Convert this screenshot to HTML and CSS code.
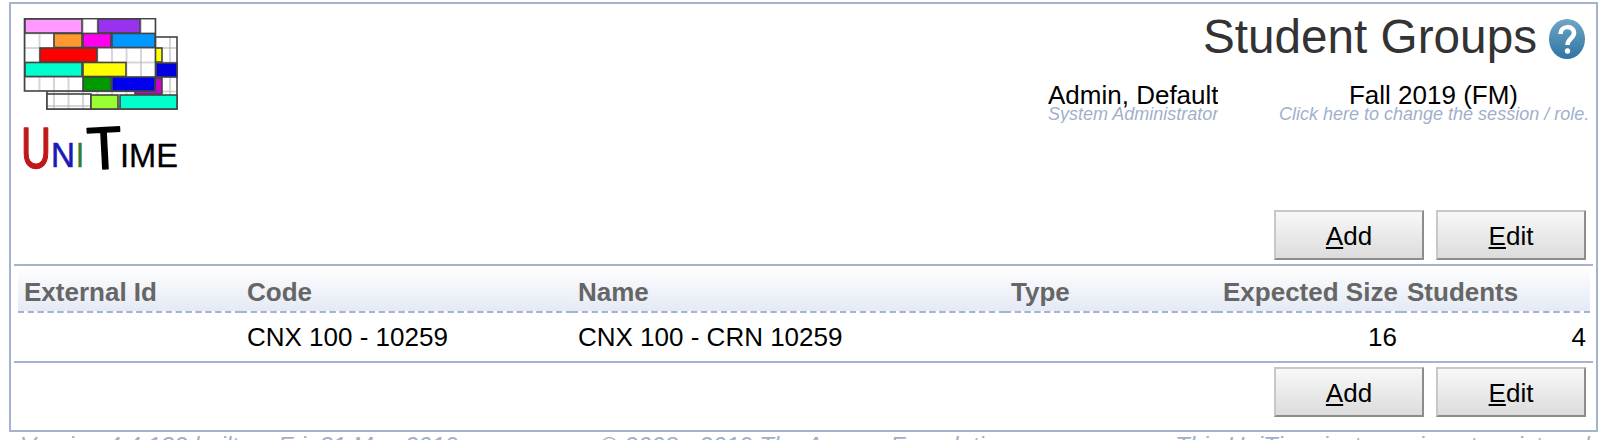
FILE: index.html
```html
<!DOCTYPE html>
<html lang="en">
<head>
    <meta charset="UTF-8">
    <meta name="viewport" content="width=device-width, initial-scale=1.0">
    <title>Student Groups</title>
    <link rel="stylesheet" href="styles.css">
</head>
<body>
    <div class="page">
        <div class="header">
            <div class="logo">
                <svg class="logo-art" width="160" height="156" viewBox="20 18 160 156">
                    <defs>
                        <filter id="soft"><feGaussianBlur stdDeviation="0.6"/></filter>
                        <pattern id="cells" x="25" y="19" width="14.5" height="14.5" patternUnits="userSpaceOnUse">
                            <rect width="14.5" height="14.5" fill="#fff" stroke="#bbb" stroke-width="1.2"/>
                        </pattern>
                    </defs>
                    <g filter="url(#soft)" stroke="#444" stroke-width="1.6">
                        <rect x="47" y="37" width="130" height="72" fill="url(#cells)"/>
                        <rect x="135" y="78" width="27" height="16" fill="#d000d0"/>
                        <rect x="155" y="48" width="7" height="14" fill="#ffff00"/>
                        <rect x="156" y="63" width="21" height="14" fill="#0000e0"/>
                        <rect x="24.500" y="18.500" width="131" height="72.500" fill="url(#cells)"/>
                        <rect x="25" y="19" width="57" height="14" fill="#ff99ff"/>
                        <rect x="98" y="19" width="42" height="14" fill="#9933ee"/>
                        <rect x="54" y="33.500" width="28" height="14" fill="#ff9933"/>
                        <rect x="83" y="33.500" width="28" height="14" fill="#ff00ee"/>
                        <rect x="112" y="33.500" width="43" height="14" fill="#0099ff"/>
                        <rect x="40" y="48" width="57" height="14" fill="#ff0000"/>
                        <rect x="25" y="62.500" width="57" height="14" fill="#00ffcc"/>
                        <rect x="83" y="62.500" width="43" height="14" fill="#ffff00"/>
                        <rect x="83" y="77" width="28" height="14" fill="#009900"/>
                        <rect x="112" y="77" width="43" height="14" fill="#0000ee"/>
                        <rect x="47" y="94" width="44" height="15" fill="url(#cells)"/>
                        <rect x="91" y="95" width="27" height="14" fill="#99ff33"/>
                        <rect x="120" y="95" width="57" height="14" fill="#00ffcc"/>
                    </g>
                    <text class="logo-u" x="21" y="168" font-size="57" textLength="30" lengthAdjust="spacingAndGlyphs">U</text>
                    <text class="logo-n" x="51" y="167" font-size="35" textLength="24" lengthAdjust="spacingAndGlyphs">N</text>
                    <text class="logo-i" x="76" y="167" font-size="35" textLength="8" lengthAdjust="spacingAndGlyphs">I</text>
                    <text class="logo-t" x="87" y="169" font-size="60" textLength="35" lengthAdjust="spacingAndGlyphs" transform="rotate(-3 104 150)">T</text>
                    <text class="logo-ime" x="120" y="167" font-size="33" textLength="58" lengthAdjust="spacingAndGlyphs">IME</text>
                </svg>
            </div>
            <div class="head-right">
                <div class="title-row">
                    <span class="title">Student Groups</span>
                    <svg class="help" width="36" height="40" viewBox="0 0 36 40">
                        <defs>
                            <linearGradient id="helpfill" x1="0" y1="0" x2="0" y2="1">
                                <stop offset="0" stop-color="#6fa5c6"/>
                                <stop offset="1" stop-color="#2e74a3"/>
                            </linearGradient>
                        </defs>
                        <ellipse cx="18" cy="20" rx="18" ry="20" fill="url(#helpfill)"/>
                        <path d="M11.500 15 C11.500 6 25 6 25 14 C25 19 18.500 20 18.500 26" fill="none" stroke="#fff" stroke-width="4.500"/>
                        <circle cx="18.500" cy="32" r="2.700" fill="#fff"/>
                    </svg>
                </div>
                <div class="session-row">
                    <div class="user">
                        <div class="main-line">Admin, Default</div>
                        <div class="sub-line">System Administrator</div>
                    </div>
                    <div class="session">
                        <div class="main-line">Fall 2019 (FM)</div>
                        <div class="sub-line">Click here to change the session / role.</div>
                    </div>
                </div>
            </div>
        </div>

        <div class="buttons top-buttons">
            <button><u>A</u>dd</button>
            <button><u>E</u>dit</button>
        </div>

        <div class="table-wrap">
            <table class="groups">
                <thead>
                    <tr>
                        <th class="c-ext">External Id</th>
                        <th class="c-code">Code</th>
                        <th class="c-name">Name</th>
                        <th class="c-type">Type</th>
                        <th class="c-size">Expected Size</th>
                        <th class="c-students">Students</th>
                    </tr>
                </thead>
                <tbody>
                    <tr>
                        <td></td>
                        <td>CNX 100 - 10259</td>
                        <td>CNX 100 - CRN 10259</td>
                        <td></td>
                        <td class="num">16</td>
                        <td class="num">4</td>
                    </tr>
                </tbody>
            </table>
        </div>

        <div class="buttons bottom-buttons">
            <button><u>A</u>dd</button>
            <button><u>E</u>dit</button>
        </div>
    </div>

    <div class="footer">
        <span>Version 4.4.132 built on Fri, 31 May 2019</span>
        <span>&copy; 2008 - 2019 The Apereo Foundation,</span>
        <span>This UniTime instance is not registered</span>
    </div>
</body>
</html>
```

FILE: styles.css
```css
html, body {
    height: 100%;
    overflow: hidden;
}
body {
    margin: 0;
    padding: 2px 16px 0 9px;
    font-family: "Liberation Sans", Arial, sans-serif;
    font-size: 26px;
    color: #000;
    background-color: #fff;
    box-sizing: border-box;
}
.page {
    height: 430px;
    box-sizing: border-box;
    border: 2px solid #a5b4cd;
    padding: 0 3px;
}
.header {
    display: flex;
    justify-content: space-between;
    height: 206px;
}
.logo {
    padding: 14px 0 0 6px;
}
.logo-art {
    display: block;
}
.logo-art text {
    font-family: "Liberation Sans", sans-serif;
    stroke-linejoin: round;
}
.logo-u {
    fill: #c01818;
    stroke: #c01818;
    stroke-width: 1.4;
}
.logo-n {
    fill: #1a1ab8;
    stroke: #1a1ab8;
    stroke-width: 0.6;
}
.logo-i {
    fill: #2e7d32;
    stroke: #2e7d32;
    stroke-width: 0.6;
}
.logo-t {
    fill: #000;
    stroke: #000;
    stroke-width: 1.5;
}
.logo-ime {
    fill: #000;
    stroke: #000;
    stroke-width: 0.3;
}
.title-row {
    display: flex;
    justify-content: flex-end;
    align-items: center;
    height: 62px;
    margin-top: 1px;
}
.title {
    font-size: 47.700px;
    color: #333;
}
.help {
    margin: 5px 8px 0 12px;
}
.session-row {
    display: flex;
    justify-content: flex-end;
    margin-top: 15px;
}
.user {
    width: 170px;
    overflow: hidden;
    white-space: nowrap;
    margin-right: 61px;
}
.session {
    width: 309px;
    text-align: center;
    white-space: nowrap;
    margin-right: 5px;
}
.main-line {
    line-height: 26px;
}
.sub-line {
    font-size: 18px;
    font-style: italic;
    color: #9fb0cc;
    line-height: 18px;
    margin-top: -3px;
}
.buttons {
    display: flex;
    justify-content: flex-end;
    gap: 12px;
    padding-right: 7px;
}
.top-buttons {
    height: 54px;
}
.bottom-buttons {
    padding-top: 4px;
}
button {
    width: 150px;
    height: 50px;
    padding: 2px 0 0;
    font-family: inherit;
    font-size: 26px;
    color: #000;
    background: linear-gradient(#f8f8f8, #dcdcdc);
    border: 2px solid;
    border-color: #c8c8c8 #8c8c8c #8c8c8c #c8c8c8;
}
.table-wrap {
    padding: 0 3px 0 4px;
    border-top: 2px solid #a5b4cd;
    border-bottom: 2px solid #a5b4cd;
}
.groups {
    width: 100%;
    border-collapse: collapse;
    table-layout: fixed;
}
.groups th {
    box-sizing: border-box;
    height: 46px;
    padding: 7px 0 0 6px;
    text-align: left;
    white-space: nowrap;
    font-size: 26px;
    color: #666;
    background: linear-gradient(#fff, #e4e9f4);
    border-bottom: 2px dashed #a5b4cd;
}
.groups td {
    box-sizing: border-box;
    height: 49px;
    padding: 0 5px 0 6px;
}
.groups td.num {
    padding-right: 4px;
    text-align: right;
}
.groups .c-ext { width: 223px; }
.groups .c-code { width: 331px; }
.groups .c-name { width: 433px; }
.groups .c-type { width: 212px; }
.groups .c-size { width: 184px; }
.footer {
    display: grid;
    grid-template-columns: 580px 575px auto;
    padding-left: 11px;
    line-height: 27px;
    font-size: 24px;
    font-style: italic;
    color: #9fb0cc;
    white-space: nowrap;
}
```
